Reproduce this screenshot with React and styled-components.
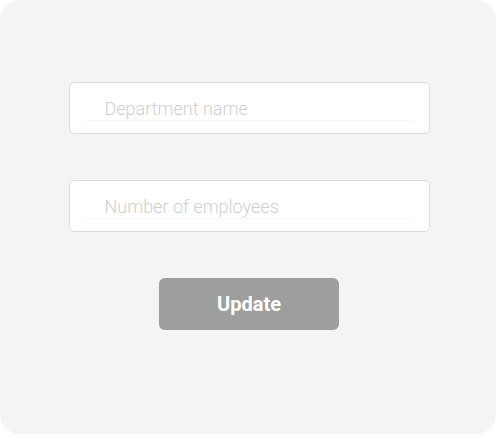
import React from 'react';
import styled, { createGlobalStyle } from 'styled-components';

const GlobalStyle = createGlobalStyle`
	html, body {
		margin: 0;
		padding: 0;
		background: #ffffff;
		font-family: Roboto, "Liberation Sans", sans-serif;
	}
`;

const Card = styled.div`
	width: 496px;
	height: 434px;
	box-sizing: border-box;
	background: #f4f4f4;
	border-radius: 20px;
	padding-top: 82px;
	display: flex;
	flex-direction: column;
	align-items: center;
	gap: 46px;
`;

const Field = styled.div`
	width: 361px;
	height: 52px;
	box-sizing: border-box;
	background: #ffffff;
	border: 1px solid #dcdcdc;
	border-radius: 5px;
	padding: 0 16px 0 14px;
	margin-left: 2px;
	display: flex;
	align-items: flex-start;
`;

const Input = styled.input`
	width: 100%;
	height: 38px;
	box-sizing: border-box;
	padding: 14px 0 0 21px;
	border: none;
	border-bottom: 1px solid #f6f6f6;
	background: transparent;
	outline: none;
	font-family: Roboto, "Liberation Sans", sans-serif;
	font-weight: 300;
	font-size: 18px;
	line-height: 22px;
	color: #333;

	&::placeholder {
		color: #cfcfcf;
	}
`;

const Button = styled.button`
	width: 180px;
	height: 52px;
	margin-left: 2px;
	border: none;
	border-radius: 6px;
	background: #9e9e9e;
	color: #ffffff;
	font-family: Roboto, "Liberation Sans", sans-serif;
	font-weight: 700;
	font-size: 20px;
	cursor: pointer;
`;

export default () => {
	return (
		<>
			<GlobalStyle />
			<Card>
				<Field>
					<Input placeholder="Department name" />
				</Field>
				<Field>
					<Input placeholder="Number of employees" />
				</Field>
				<Button>Update</Button>
			</Card>
		</>
	);
};
